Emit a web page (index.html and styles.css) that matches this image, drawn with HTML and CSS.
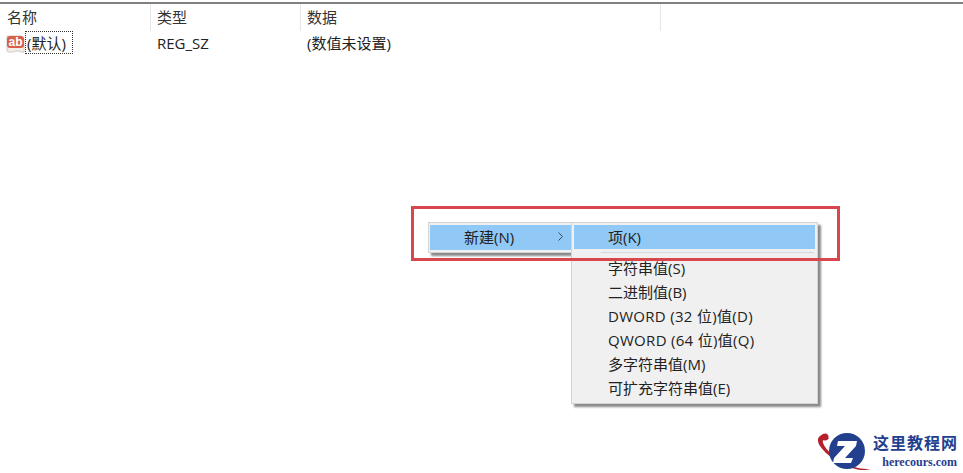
FILE: index.html
```html
<!DOCTYPE html>
<html lang="zh-CN">
<head>
	<meta charset="UTF-8">
	<title>注册表</title>
	<link rel="stylesheet" href="styles.css">
</head>
<body>
<div class="pane">
  <div class="head">
    <div class="col col-name">名称</div>
    <div class="col col-type">类型</div>
    <div class="col col-data">数据</div>
  </div>
  <div class="row">
    <div class="cell-name">
      <svg class="ab" width="19" height="19" viewBox="0 0 19 19">
        <path d="M1 1h14l3 3v13c-3 1-5-2-8-1s-6 2-9 0z" fill="#f3eee8" stroke="#cfc9c4"/>
        <rect x="1" y="1" width="17" height="12" rx="3" fill="#d8604a"/>
        <text x="2.5" y="10.5" class="ab-text">ab</text>
      </svg>
      <span class="focus">(默认)</span>
    </div>
    <div class="cell-type">REG_SZ</div>
    <div class="cell-data">(数值未设置)</div>
  </div>
</div>

<div class="menu menu-main">
  <div class="item hot">
    <span>新建(N)</span>
    <svg class="arrow" width="5" height="9" viewBox="0 0 5 9"><path d="M.5.5l4 4-4 4" fill="none" stroke="#444"/></svg>
  </div>
</div>

<ul class="menu menu-sub">
  <li class="item hot">项(K)</li>
  <li class="sep"></li>
  <li class="item">字符串值(S)</li>
  <li class="item">二进制值(B)</li>
  <li class="item wide">DWORD (32 位)值(D)</li>
  <li class="item wide">QWORD (64 位)值(Q)</li>
  <li class="item">多字符串值(M)</li>
  <li class="item">可扩充字符串值(E)</li>
</ul>

<div class="mark"></div>

<div class="logo">
  <svg width="56" height="42" viewBox="0 0 56 42">
    <path d="M8 3C1 4-1 9 3 15c6 9 19 18 32 22 6 2 13 3 18 1-9 0-15-1-23-5C20 28 9 20 6 12 5 8 8 7 12 8z" fill="#b5202b"/>
    <circle cx="8" cy="6" r="3.5" fill="#b5202b"/>
    <circle cx="30" cy="20" r="18" fill="#23408f"/>
    <path d="M21 10h19l-1 5-11 12h8l-2 5H16l1-5 11-12h-8z" fill="#fff"/>
  </svg>
  <div class="logo-text">
    <div class="logo-cn">这里教程网</div>
    <div class="logo-en">herecours.com</div>
  </div>
</div>
</body>
</html>
```

FILE: styles.css
```css
html, body {
  height: 100%;
  overflow: hidden;
  background: white;
}

body {
  margin: 0;
  position: relative;
  font-family: "Open Sans", "Noto Sans CJK SC", sans-serif;
  font-size: 15px;
  color: #222;
}

/* list header and the one row */
.pane {
  border-top: 2px solid #808080;
  margin-top: 2px;
}

.head {
  display: flex;
  height: 27px;
  line-height: 26px;
  color: #333;
}

.col {
  padding-left: 6px;
  border-right: 1px solid #e6e6e6;
  box-sizing: border-box;
}

.col-name { width: 151px; padding-left: 7px; }
.col-type { width: 150px; }
.col-data { width: 360px; }

.row {
  display: flex;
  height: 24px;
  line-height: 24px;
}

.cell-name {
  width: 150px;
  display: flex;
  align-items: flex-start;
  padding-left: 6px;
  box-sizing: border-box;
}

.ab {
  flex: none;
  margin-top: 4px;
}

.ab-text {
  font-family: "Liberation Sans", sans-serif;
  font-size: 12px;
  font-weight: bold;
  fill: #fff;
}

.focus {
  border: 1px dotted #333;
  width: 48px;
  height: 23px;
  line-height: 22px;
  padding-left: 1px;
  white-space: nowrap;
  box-sizing: border-box;
}

.cell-type {
  width: 150px;
  padding-left: 7px;
  box-sizing: border-box;
}

.cell-data {
  padding-left: 7px;
}

/* context menus */
.menu {
  position: absolute;
  margin: 0;
  list-style: none;
  background: #f0f0f0;
  border: 1px solid #d4d4d4;
  box-shadow: 3px 3px 2px #8a8a8a;
  box-sizing: border-box;
}

.menu-main {
  left: 428px;
  top: 222px;
  width: 145px;
  height: 31px;
  padding: 2px 1px;
}

.menu-sub {
  left: 571px;
  top: 222px;
  width: 247px;
  height: 182px;
  padding: 2px;
}

.item {
  height: 24px;
  line-height: 24px;
  padding-left: 34px;
}

.wide {
  letter-spacing: 0.3px;
}

.menu-main .item {
  display: flex;
  justify-content: space-between;
  align-items: center;
  height: 25px;
  padding: 0 8px 2px 34px;
  box-sizing: border-box;
}

.hot {
  background: #90c8f6;
}

.sep {
  height: 1px;
  margin: 3px 1px 3px 27px;
  background: #d7d7d7;
}

/* red highlight over the menus */
.mark {
  position: absolute;
  left: 411px;
  top: 206px;
  width: 429px;
  height: 55px;
  border: 3px solid #d9474d;
  box-sizing: border-box;
}

/* watermark */
.logo {
  position: absolute;
  left: 817px;
  top: 431px;
  display: flex;
}

.logo-text {
  width: 84px;
  text-align: right;
}

.logo-cn {
  font-family: "Noto Sans CJK SC", sans-serif;
  font-size: 16px;
  font-weight: bold;
  line-height: 22px;
  color: #23408f;
  letter-spacing: 1px;
  white-space: nowrap;
}

.logo-en {
  font-family: "Liberation Serif", serif;
  font-size: 12px;
  font-weight: bold;
  line-height: 14px;
  margin-top: 2px;
  color: #23408f;
  white-space: nowrap;
}
```
